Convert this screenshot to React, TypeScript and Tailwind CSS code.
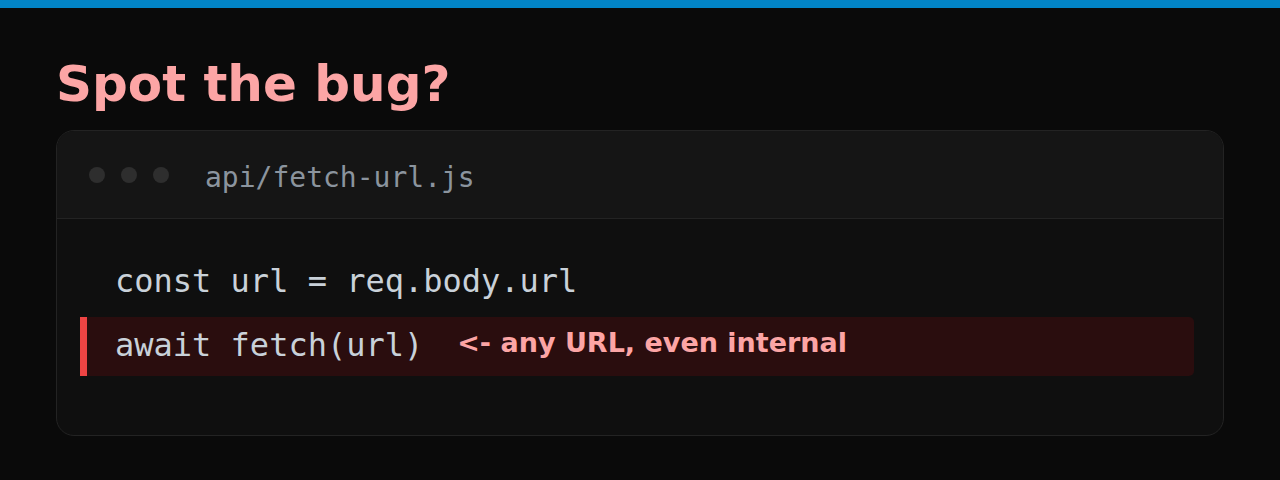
import React from "react"

const mono = { fontFamily: "'DejaVu Sans Mono', monospace" }

function Dots() {
  return (
    <div className="flex gap-4">
      <span className="block h-4 w-4 rounded-full bg-[#2e2e2e]" />
      <span className="block h-4 w-4 rounded-full bg-[#2e2e2e]" />
      <span className="block h-4 w-4 rounded-full bg-[#2e2e2e]" />
    </div>
  )
}

export default function App() {
  return (
    <div className="h-[480px] w-full overflow-hidden bg-[#0a0a0a] font-['DejaVu_Sans',sans-serif]">
      <div className="h-2 w-full bg-[#0284c7]" />

      <div className="px-14 pt-[52px]">
        <h1 className="text-[50px] font-bold leading-[48px] text-[#fca5a5]">Spot the bug?</h1>

        {/* code window */}
        <div className="mt-[22px] overflow-hidden rounded-[18px] border border-[#232323] bg-[#0f0f0f]">
          <div className="flex h-[88px] items-center gap-[36px] border-b border-[#232323] bg-[#151515] px-8">
            <Dots />
            <span className="pt-[6px] text-[28px] text-[#8b949e]" style={mono}>
              api/fetch-url.js
            </span>
          </div>

          <div className="flex flex-col gap-[5px] pb-[59px] pl-[23px] pr-[29px] pt-[34px]" style={mono}>
            <div className="flex h-[59px] items-center pb-[4px] pl-[35px] text-[32px] text-[#c9d1d9]">
              const url = req.body.url
            </div>
            <div className="flex h-[59px] items-center rounded-r-[5px] border-l-[7px] border-[#ef4444] bg-[#2a0d0e] pb-[4px] pl-[28px] text-[32px] text-[#c9d1d9]">
              <span>await fetch(url)</span>
              <span className="ml-[34px] pb-[2px] font-['DejaVu_Sans',sans-serif] text-[27px] font-bold text-[#fca5a5]">
                &lt;- any URL, even internal
              </span>
            </div>
          </div>
        </div>
      </div>
    </div>
  )
}
